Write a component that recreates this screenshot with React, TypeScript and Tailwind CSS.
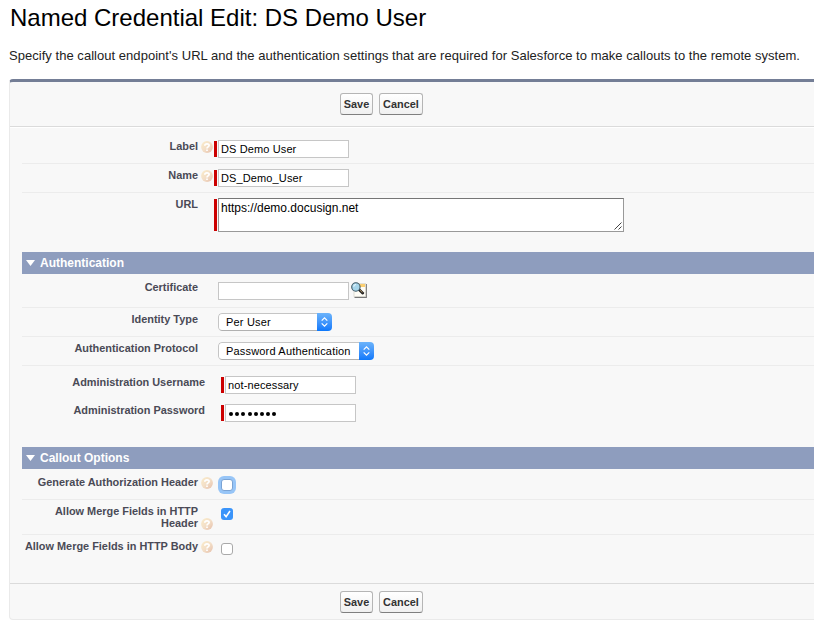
import React from "react";

function HelpIcon() {
  return (
    <svg width="12" height="12" viewBox="0 0 12 12" className="block">
      <defs>
        <linearGradient id="help" x1="0" y1="0" x2="1" y2="1">
          <stop offset="0" stopColor="#fbecc9" />
          <stop offset="0.5" stopColor="#f3dfc8" />
          <stop offset="1" stopColor="#e6bfaa" />
        </linearGradient>
      </defs>
      <circle cx="6" cy="6" r="5.9" fill="url(#help)" />
      <path d="M3.8 4.7C3.9 2.3 8.1 2.2 8.1 4.5C8.1 5.9 6 5.8 6 7.4M6 8.4V10" fill="none" stroke="#fff" strokeWidth="1.7" />
    </svg>
  );
}

function LookupIcon() {
  return (
    <svg width="16" height="16" viewBox="0 0 16 16" className="block">
      <path d="M3.5 15.2H15.2V2" fill="none" stroke="#777" strokeWidth="1.4" />
      <rect x="3" y="1.5" width="11.5" height="13" fill="#fffdf6" stroke="#d8d6ce" strokeWidth="0.8" />
      <rect x="8" y="2" width="6" height="3" fill="#fbcf72" />
      <path d="M8.2 7.8L11.8 11.2" stroke="#222" strokeWidth="2.6" strokeLinecap="round" />
      <path d="M8.8 8L11.4 10.5" stroke="#d8b070" strokeWidth="0.8" />
      <circle cx="4.9" cy="5" r="4.2" fill="#a6d5ea" stroke="#3d5663" strokeWidth="1.1" />
      <path d="M2.7 4.8C2.8 3.3 3.8 2.6 5 2.5" stroke="#e8f8ff" strokeWidth="1.1" fill="none" />
    </svg>
  );
}

function Row({ label, h, pt = "pt-0", help, helpPt = "pt-0", fieldPt = "pt-0", line = true, labelW = "w-[176px]", gap = "w-4", children }: {
  label: React.ReactNode; h: string; pt?: string; help?: boolean; helpPt?: string; fieldPt?: string; line?: boolean; labelW?: string; gap?: string; children: React.ReactNode;
}) {
  return (
    <div className={`flex ${h} ${line ? "border-b border-[#ececec]" : ""}`}>
      <div className={`${labelW} ${pt} shrink-0 whitespace-nowrap text-right text-[10.92px] font-bold leading-3 text-[#4a4a56]`}>{label}</div>
      <div className={`${gap} ${helpPt} shrink-0 pl-[3px]`}>{help && <HelpIcon />}</div>
      <div className={`${fieldPt} flex items-start`}>{children}</div>
    </div>
  );
}

function Required({ h = "h-4" }: { h?: string }) {
  return <div className={`${h} mt-px mr-px w-[3px] bg-[#c00]`} />;
}

function TextInput({ value }: { value: string }) {
  return (
    <div className="h-[18px] w-[131px] border border-[#c6c6c6] bg-white pl-[2px] text-[11px] leading-[17px] tracking-[0.12px] text-black">{value}</div>
  );
}

function Select({ value, w }: { value: string; w: string }) {
  return (
    <div className={`${w} flex h-[18px] overflow-hidden rounded-[4px] bg-white text-[11px] tracking-[0.18px] text-black`}>
      <div className="flex-1 whitespace-nowrap rounded-l-[4px] border border-r-0 border-[#c5c5c5] border-b-[#b0b0b0] pl-[7px] leading-[17px]">{value}</div>
      <div className="flex w-[15px] items-center justify-center bg-linear-to-b from-[#6bb3fa] to-[#0a78fb]">
        <svg width="7" height="10" viewBox="0 0 7 10" fill="none" stroke="#fff" strokeWidth="1.2">
          <path d="M0.7 3.6L3.5 0.9L6.3 3.6M0.7 6.4L3.5 9.1L6.3 6.4" />
        </svg>
      </div>
    </div>
  );
}

function SectionHeader({ title }: { title: string }) {
  return (
    <div className="flex h-[22px] items-center bg-[#8e9dbe] pl-1 text-[12px] font-bold text-white">
      <svg width="9" height="6" viewBox="0 0 9 6" className="mr-[5px]"><path d="M0 0H9L4.5 6Z" fill="#fff" /></svg>
      <span>{title}</span>
    </div>
  );
}

function Buttons() {
  const base = "h-[22px] rounded-[3px] border border-[#b5b5b5] border-b-[#7f7f7f] bg-linear-to-b from-white to-[#f0f0f0] text-center text-[10.92px] font-bold leading-[20px] text-[#333]";
  return (
    <div className="flex gap-[6px] pl-[330px]">
      <button className={`${base} w-[33px]`}>Save</button>
      <button className={`${base} w-[44px]`}>Cancel</button>
    </div>
  );
}

export default function App() {
  return (
    <div className="h-[629px] w-[814px] overflow-hidden bg-white font-['Liberation_Sans',Arial,sans-serif]">
      <h1 className="h-[46px] whitespace-nowrap pl-[10px] pt-1 text-[24px] leading-[28px] text-black">Named Credential Edit: DS Demo User</h1>
      <p className="h-[33px] whitespace-nowrap pl-[9px] pt-[2px] text-[13px] leading-4 tracking-[0.036px] text-[#222]">
        Specify the callout endpoint's URL and the authentication settings that are required for Salesforce to make callouts to the remote system.
      </p>
      <div className="ml-[9px] h-[541px] rounded-l-[4px] border-b border-l border-t-3 border-b-[#eaeaea] border-l-[#eaeaea] border-t-[#747e96] bg-[#f8f8f8]">
        <div className="h-[45px] border-b border-[#dbdbdb] pt-[11px]"><Buttons /></div>
        <div className="h-[456px] border-t border-white pl-3">
          <Row label="Label" h="h-9" pt="pt-[12px]" help helpPt="pt-[13px]" fieldPt="pt-3">
            <Required /><TextInput value="DS Demo User" />
          </Row>
          <Row label="Name" h="h-[29px]" pt="pt-[5px]" help helpPt="pt-[6px]" fieldPt="pt-[5px]">
            <Required /><TextInput value="DS_Demo_User" />
          </Row>
          <Row label="URL" h="h-[59px]" pt="pt-[5px]" fieldPt="pt-[5px]" line={false}>
            <Required h="h-8" />
            <div className="flex h-[34px] w-[406px] items-end justify-between border border-[#999] border-t-[#767676] bg-white pl-[2px] text-[12px] leading-[14px] text-black">
              <span className="self-start pt-[2px]">https://demo.docusign.net</span>
              <svg width="9" height="9" viewBox="0 0 9 9" stroke="#444" strokeWidth="1"><path d="M0.5 7.5L7.5 0.5M4.5 7.5L7.5 4.5" /></svg>
            </div>
          </Row>
          <SectionHeader title="Authentication" />
          <Row label="Certificate" h="h-[34px]" pt="pt-[7px]" fieldPt="pt-2" gap="w-5">
            <TextInput value="" />
            <div className="ml-[2px]"><LookupIcon /></div>
          </Row>
          <Row label="Identity Type" h="h-[29px]" pt="pt-[5px]" fieldPt="pt-[5px]" gap="w-5"><Select value="Per User" w="w-[114px]" /></Row>
          <Row label="Authentication Protocol" h="h-[29px]" pt="pt-[5px]" fieldPt="pt-[5px]" gap="w-5"><Select value="Password Authentication" w="w-[156px]" /></Row>
          <Row label="Administration Username" h="h-[38px]" pt="pt-[10px]" fieldPt="pt-[10px]" labelW="w-[183px]" line={false}>
            <Required /><TextInput value="not-necessary" />
          </Row>
          <Row label="Administration Password" h="h-[43px]" pt="pt-0" fieldPt="pt-0" labelW="w-[183px]" line={false}>
            <Required />
            <div className="flex h-[18px] w-[131px] items-center gap-[2.2px] border border-[#c6c6c6] bg-white pl-[3px]">
              {Array.from({ length: 8 }, (_, i) => <span key={i} className="mt-px h-[4px] w-[4px] rounded-full bg-black" />)}
            </div>
          </Row>
          <SectionHeader title="Callout Options" />
          <Row label="Generate Authorization Header" h="h-[31px]" pt="pt-[7px]" help helpPt="pt-[8px]" fieldPt="pt-[10px]" gap="w-[23px]">
            <div className="h-3 w-3 rounded-[3px] border border-[#7aa3d4] bg-white ring-3 ring-[#97c5f7]" />
          </Row>
          <Row label={<>Allow Merge Fields in HTTP<br />Header</>} h="h-[35px]" pt="pt-[5px]" help helpPt="pt-[18px]" fieldPt="pt-2" gap="w-[23px]">
            <div className="h-3 w-3 rounded-[3px] bg-[#3a94fa]">
              <svg width="12" height="12" viewBox="0 0 12 12" fill="none" stroke="#fff" strokeWidth="1.6"><path d="M3 6.3L5.1 8.6L9 3" /></svg>
            </div>
          </Row>
          <Row label="Allow Merge Fields in HTTP Body" h="h-[48px]" pt="pt-[5px]" help helpPt="pt-[6px]" fieldPt="pt-2" gap="w-[23px]" line={false}>
            <div className="h-3 w-3 rounded-[3px] border border-[#a9a9a9] bg-white" />
          </Row>
        </div>
        <div className="h-9 border-t border-[#dbdbdb] pt-[7px]"><Buttons /></div>
      </div>
    </div>
  );
}
